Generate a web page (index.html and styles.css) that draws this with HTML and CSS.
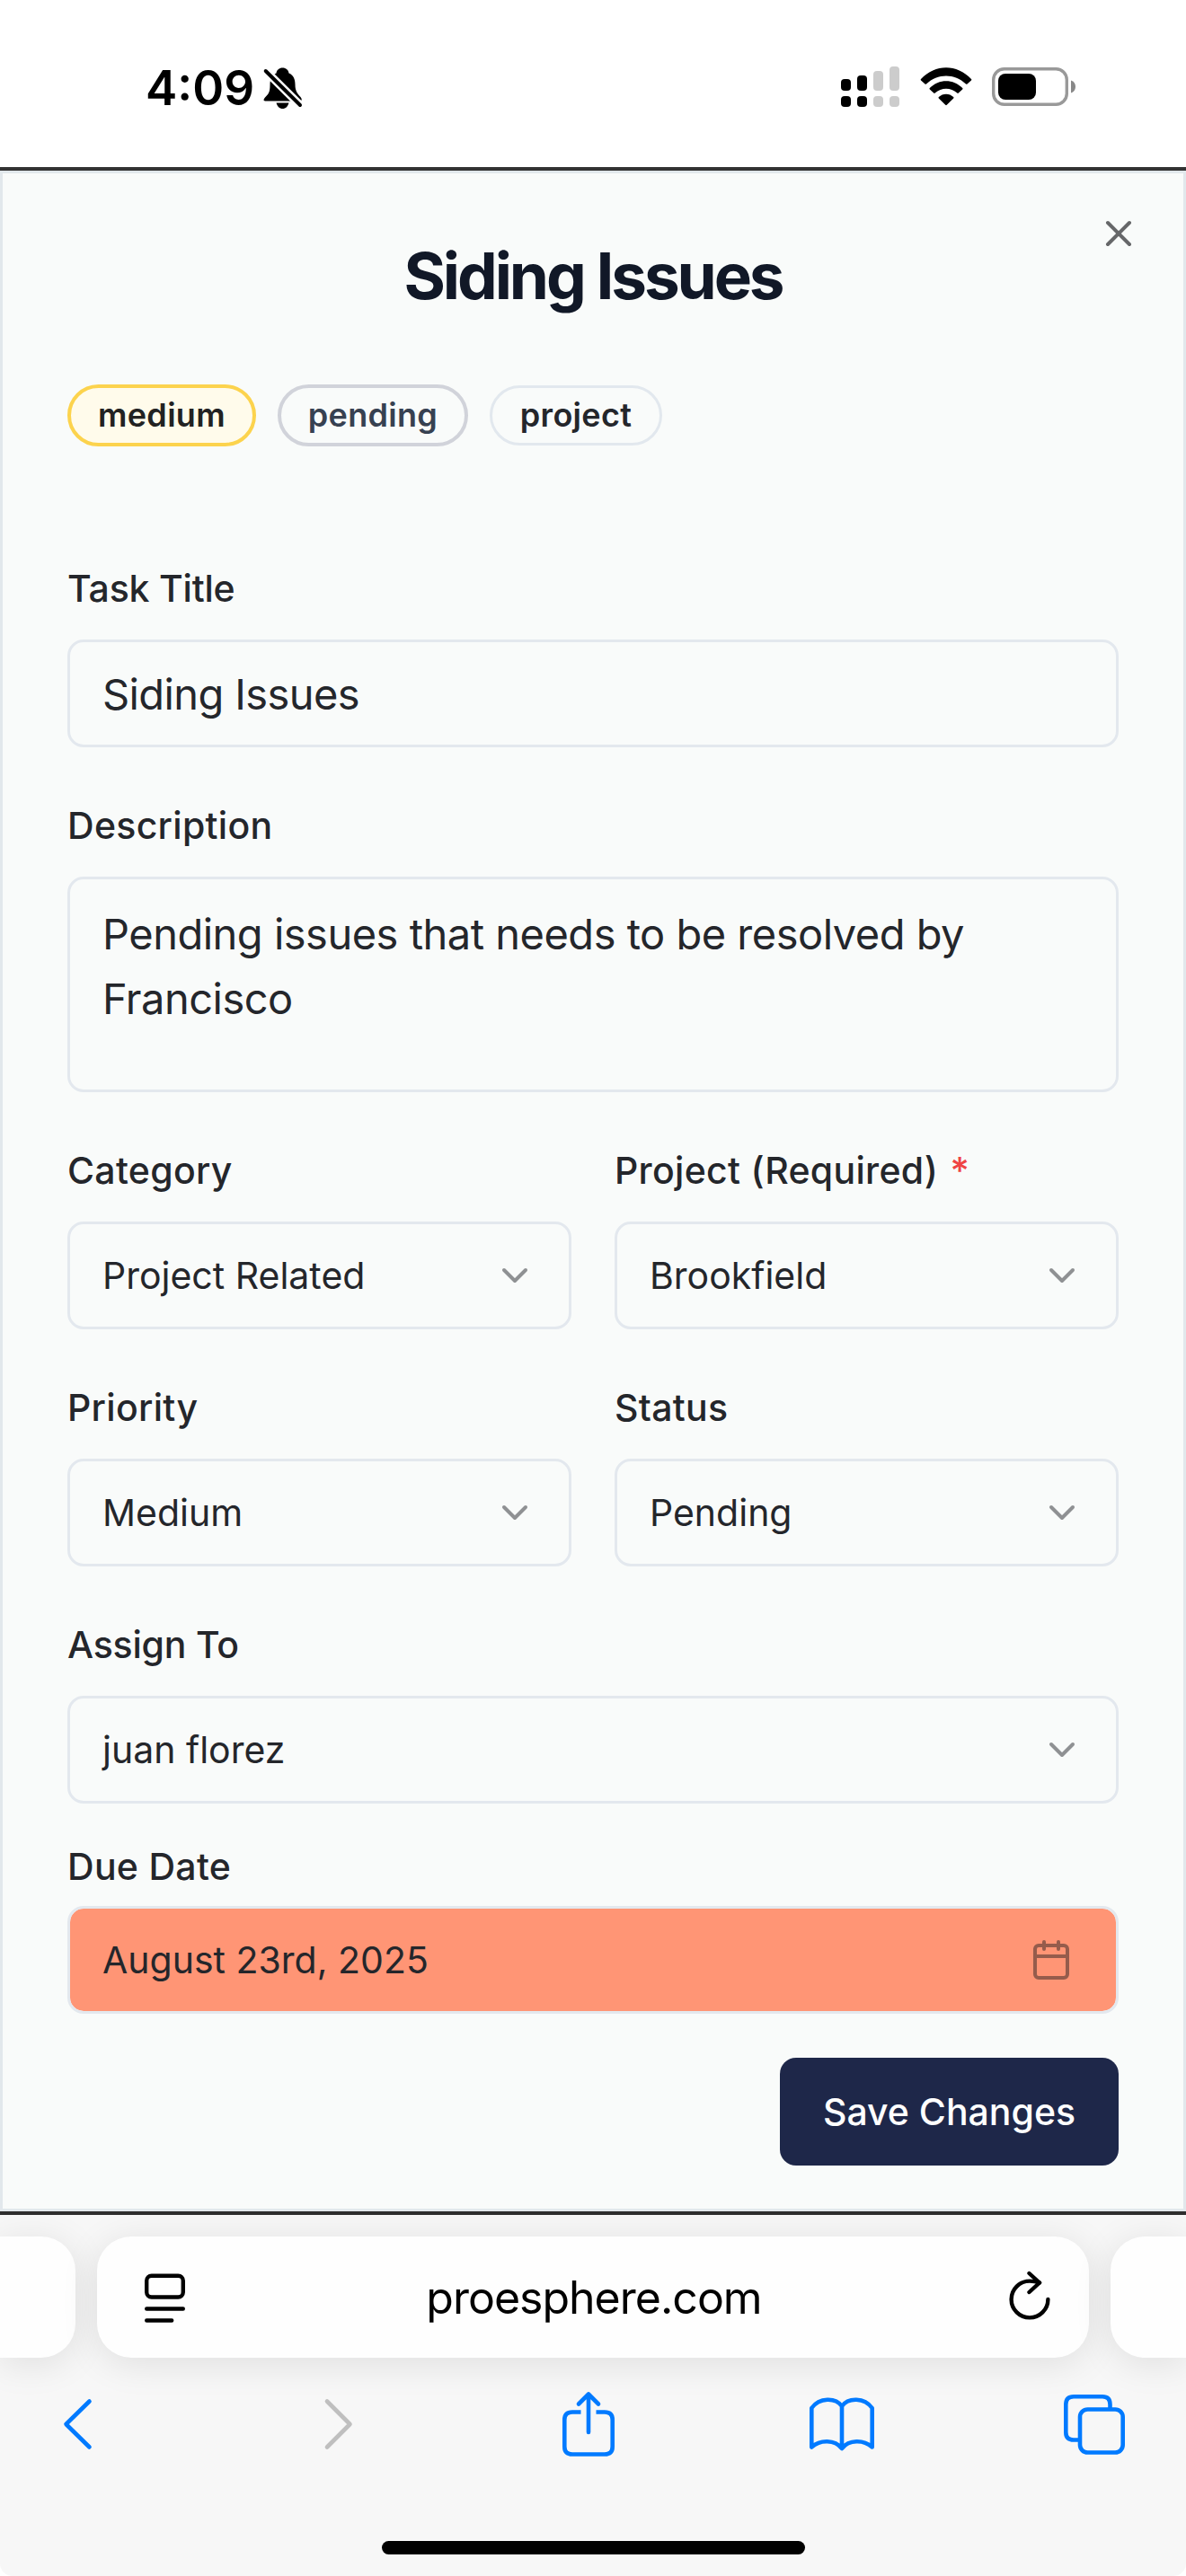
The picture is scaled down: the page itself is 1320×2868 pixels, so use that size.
FILE: index.html
```html
<!DOCTYPE html>
<html lang="en">
<head>
<meta charset="utf-8">
<title>Siding Issues</title>
<link rel="stylesheet" href="styles.css">
</head>
<body>
<div class="screen">
  <header class="status-bar">
    <div class="status-left">
      <span class="clock">4:09</span>
      <svg class="bell" width="44" height="48" viewBox="0 0 44 48">
        <path d="M21.500.500c-3.800 0-6.500 2.500-7 6C9.500 9 7.500 13.500 7.500 19.500c0 8-1.500 10-5.500 14C-.5 36.500.500 37.500 3 37.500h37.500c2.500 0 3-2 1-4.500-4-4.500-6-7-6-14 0-6-2-10.500-7-12.500-.5-3.500-3.200-6-7-6z"/>
        <path d="M14.500 39.500h14c-1 3.800-3.500 6.500-7 6.500S15.500 43.300 14.500 39.500z"/>
        <path d="M2.700 4 41 42" stroke="#fff" stroke-width="9"/>
        <path d="M2.700 4 41 42" stroke="#000" stroke-width="4" stroke-linecap="round"/>
      </svg>
    </div>
    <div class="status-right">
      <svg class="signal" width="66" height="46" viewBox="0 0 66 46">
        <rect x="0" y="14" width="11" height="13" rx="4"/><rect x="18" y="10" width="11" height="17" rx="4"/>
        <rect x="0" y="33" width="11" height="12" rx="4"/><rect x="18" y="33" width="11" height="12" rx="4"/>
        <g fill="#ccc"><rect x="36" y="5" width="11" height="22" rx="4"/><rect x="54" y="0" width="11" height="27" rx="4"/><rect x="36" y="33" width="11" height="12" rx="4"/><rect x="54" y="33" width="11" height="12" rx="4"/></g>
      </svg>
      <svg class="wifi" width="58" height="43" viewBox="0 0 58 43">
        <path d="M1 13C17-4 41-4 57 13q.8.800 0 1.600L52.500 18.500q-.8.600-1.500 0C38.500 6.500 19.500 6.500 7 18.500q-.7.600-1.500 0L1 14.600q-.8-.8 0-1.600z"/>
        <path d="M10.800 23C21 12.500 37 12.500 47.200 23q.8.800 0 1.600l-4.400 4q-.8.600-1.500 0c-7-6.400-17.600-6.400-24.600 0q-.7.600-1.500 0l-4.400-4q-.8-.8 0-1.600z"/>
        <path d="M20.800 33c4.600-4.500 11.800-4.500 16.400 0q.7.800 0 1.600L29.800 41.800q-.8.800-1.600 0L20.800 34.600q-.7-.8 0-1.600z"/>
      </svg>
      <svg class="battery" width="94" height="44" viewBox="0 0 94 44">
        <rect x="1.700" y="1.700" width="81.600" height="39.600" rx="12" fill="none" stroke="#999" stroke-width="3.400"/>
        <rect x="7" y="7" width="42" height="29" rx="8"/>
        <path d="M88 14.500c3 .8 5 3.500 5 7s-2 6.200-5 7z" fill="#888"/>
      </svg>
    </div>
  </header>

  <main class="page">
    <section class="dialog">
      <svg class="close" width="48" height="48" viewBox="0 0 24 24"><path d="M18 6 6 18M6 6l12 12"/></svg>
      <h1 class="title">Siding Issues</h1>
      <div class="badges">
        <span class="badge badge-medium">medium</span>
        <span class="badge badge-pending">pending</span>
        <span class="badge badge-project">project</span>
      </div>

      <form class="form">
        <div class="field">
          <label class="label-tight">Task Title</label>
          <div class="box text-input">Siding Issues</div>
        </div>
        <div class="field">
          <label>Description</label>
          <div class="box text-area">Pending issues that needs to be resolved by<br>Francisco</div>
        </div>
        <div class="field-row">
          <div class="field">
            <label>Category</label>
            <div class="box select">Project Related<svg class="chevron" width="48" height="48" viewBox="0 0 24 24"><path d="m6 9 6 6 6-6"/></svg></div>
          </div>
          <div class="field">
            <label>Project (Required) <span class="required">*</span></label>
            <div class="box select">Brookfield<svg class="chevron" width="48" height="48" viewBox="0 0 24 24"><path d="m6 9 6 6 6-6"/></svg></div>
          </div>
        </div>
        <div class="field-row">
          <div class="field">
            <label>Priority</label>
            <div class="box select">Medium<svg class="chevron" width="48" height="48" viewBox="0 0 24 24"><path d="m6 9 6 6 6-6"/></svg></div>
          </div>
          <div class="field">
            <label>Status</label>
            <div class="box select">Pending<svg class="chevron" width="48" height="48" viewBox="0 0 24 24"><path d="m6 9 6 6 6-6"/></svg></div>
          </div>
        </div>
        <div class="field">
          <label class="label-tight">Assign To</label>
          <div class="box select">juan florez<svg class="chevron" width="48" height="48" viewBox="0 0 24 24"><path d="m6 9 6 6 6-6"/></svg></div>
        </div>
        <div class="field field-date">
          <label>Due Date</label>
          <div class="box select date">August 23rd, 2025<svg class="calendar" width="48" height="48" viewBox="0 0 24 24"><rect x="3" y="4" width="18" height="18" rx="2"/><path d="M16 2v4M8 2v4M3 10h18"/></svg></div>
        </div>
        <div class="actions"><button class="save" type="button">Save Changes</button></div>
      </form>
    </section>
  </main>

  <footer class="browser">
    <div class="tabs">
      <div class="tab tab-prev"></div>
      <div class="tab tab-current">
        <svg width="46" height="56" viewBox="0 0 46 56" class="line-icon"><rect x="2.200" y="3.700" width="40.600" height="23.800" rx="5.500"/><path d="M2.200 40.500h40.600M2.200 53.500h28"/></svg>
        <span class="url">proesphere.com</span>
        <svg width="46" height="56" viewBox="0 0 46 56" class="line-icon"><path d="M43.400 30A20.400 20.400 0 1 1 23 9.600c4 0 7 .5 11 1.800"/><path d="M22.500 1 34 11.500 22.500 22"/></svg>
      </div>
      <div class="tab tab-next"></div>
    </div>
    <nav class="toolbar">
      <svg width="32" height="56" viewBox="0 0 32 56"><path d="M28.500 2.500 2.500 28l26 25.500"/></svg>
      <svg class="disabled" width="32" height="56" viewBox="0 0 32 56"><path d="M3 2.500 28.500 28 3 53.500"/></svg>
      <svg width="58" height="72" viewBox="0 0 58 72"><path stroke-linecap="butt" d="M20.500 22.500H11q-8.700 0-8.700 8.500v30q0 8.500 8.700 8.500h36q8.700 0 8.700-8.500V31q0-8.500-8.700-8.500h-9.500"/><path d="M29 45V3M18 13.500 29 2.500l11 11"/></svg>
      <svg width="72" height="60" viewBox="0 0 72 60"><path d="M36 57c-8-10-24-10-33.700-1.500V12C11 0 29 0 36 10c7-10 25-10 33.700 2v43.500C60 47 44 47 36 57zM36 10v46"/></svg>
      <svg width="68" height="67" viewBox="0 0 68 67"><path stroke-linecap="butt" d="M18 50.500h-7q-8.700 0-8.700-8.500V11q0-8.700 8.700-8.700h32q8.500 0 8.500 8.700v5.500"/><rect x="18" y="16.500" width="47.700" height="48" rx="8.500"/></svg>
    </nav>
    <div class="home-indicator"></div>
  </footer>
</div>
</body>
</html>
```
FILE: styles.css
```css
* { box-sizing: border-box; }
body { margin: 0; background: #fff; font-family: Inter, "Liberation Sans", sans-serif; color: #24262b; }
svg { display: block; flex: none; overflow: visible; }
.screen { width: 1320px; height: 2868px; display: flex; flex-direction: column; overflow: hidden; }

.status-bar { height: 186px; padding: 74px 122px 0 162px; display: flex; justify-content: space-between; }
.status-left, .status-right { display: flex; align-items: flex-start; }
.clock { font-size: 53px; font-weight: 600; line-height: 48px; color: #000; }
.bell { margin: 1px 0 0 10px; }
.wifi { margin: 1px 0 0 22px; }
.battery { margin: 1px 0 0 22px; }

.page { height: 2280px; border-top: 4px solid #333; border-bottom: 4px solid #2e2e2e; }
.dialog { position: relative; height: 2272px; padding: 78px 72px 0; background: #f9fbfa; border: 3px solid #e2e8ec; }
.close { position: absolute; left: 1218px; top: 43px; fill: none; stroke: #666769; stroke-width: 2; stroke-linecap: round; }
.title { margin: 0; text-align: center; font-size: 71px; line-height: 72px; font-weight: 700; letter-spacing: -3.1px; color: #111827; }
.badges { display: flex; align-items: center; gap: 24px; margin-top: 85px; height: 69px; }
.badge { display: flex; align-items: center; justify-content: center; padding-bottom: 2px; font-size: 36px; font-weight: 600; letter-spacing: .3px; border-radius: 35px; }
.badge-medium { width: 210px; height: 69px; border: 4px solid #fcd34d; background: #fffbeb; color: #222; }
.badge-pending { width: 212px; height: 69px; border: 4px solid #d1d3da; color: #374151; }
.badge-project { width: 192px; height: 67px; border: 3px solid #e2e8ee; }

.form { margin-top: 137px; display: flex; flex-direction: column; gap: 66px; }
.field { flex: 1; display: flex; flex-direction: column; gap: 36px; }
.field label { font-size: 41px; line-height: 42px; font-weight: 500; letter-spacing: .3px; white-space: nowrap; }
.field .label-tight { letter-spacing: -.2px; }
.required { margin-left: 2px; color: #ef4444; }
.field-row { display: flex; gap: 48px; }
.box { border: 3px solid #e3e8ee; border-radius: 18px; height: 120px; padding: 0 36px; }
.text-input { font-size: 47px; line-height: 116px; letter-spacing: -.6px; }
.text-area { height: 240px; padding-top: 25px; font-size: 47px; line-height: 72px; letter-spacing: -.5px; white-space: nowrap; }
.select { display: flex; align-items: center; justify-content: space-between; font-size: 41px; }
.chevron { fill: none; stroke: #8f9193; stroke-width: 2; stroke-linecap: round; stroke-linejoin: round; }
.field-date { margin-top: -17px; gap: 23px; }
.date { background: #ff9575; background-clip: padding-box; padding-right: 48px; }
.calendar { fill: none; stroke: #955c4c; stroke-width: 2; stroke-linecap: round; stroke-linejoin: round; }
.actions { display: flex; justify-content: flex-end; margin-top: -17px; }
.save { width: 377px; height: 120px; border: 0; border-radius: 18px; background: #1e2749; color: #fff; font: 500 41px Inter, "Liberation Sans", sans-serif; padding: 0; white-space: nowrap; }

.browser { height: 402px; background: #f7f7f7; border-radius: 0 0 14px 14px; display: flex; flex-direction: column; }
.tabs { display: flex; gap: 24px; margin-top: 24px; height: 135px; }
.tab { background: #fefefe; box-shadow: 0 6px 42px rgba(0, 0, 0, .1); }
.tab-prev { width: 84px; border-radius: 0 38px 38px 0; }
.tab-current { width: 1104px; border-radius: 38px; padding: 0 43px 0 53px; display: flex; align-items: center; justify-content: space-between; }
.tab-next { width: 84px; border-radius: 38px 0 0 38px; }
.line-icon { fill: none; stroke: #000; stroke-width: 4.400; stroke-linecap: round; stroke-linejoin: round; }
.url { margin-right: 8px; font-size: 50px; letter-spacing: -1px; color: #000; }
.toolbar { display: grid; grid-template-columns: 290px 265px 275px 283px auto; align-items: center; margin-top: 37px; height: 74px; padding-left: 71px; }
.toolbar svg { fill: none; stroke: #007aff; stroke-width: 4.600; stroke-linecap: round; stroke-linejoin: round; }
.toolbar .disabled { stroke: #bfbfbf; }
.home-indicator { width: 471px; height: 15px; border-radius: 8px; background: #000; margin: 93px auto 0; }
```
